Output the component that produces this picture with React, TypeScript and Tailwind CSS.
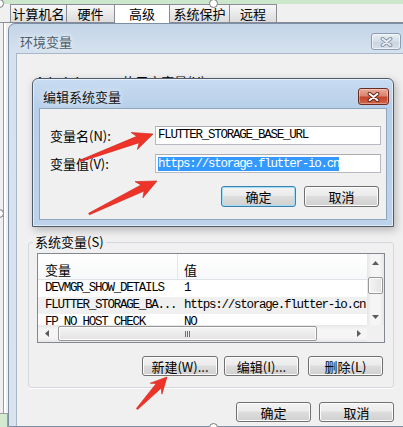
import React from 'react';

const CJK = "font-['Noto_Sans_CJK_SC','Liberation_Sans',sans-serif]";
const MONO = "font-['Liberation_Mono',monospace] text-[12.5px] tracking-[-1.25px]";

function Btn({ label, className = '', focused = false }: { label: string; className?: string; focused?: boolean }) {
  return (
    <div
      className={`flex items-center justify-center rounded-[3px] border text-[13px] leading-none text-black bg-[linear-gradient(180deg,#f3f3f3_0%,#ebebeb_45%,#dddddd_50%,#d0d0d0_100%)] ${
        focused ? 'border-[#3c7fb1] shadow-[inset_0_0_0_1px_#9fe0f8]' : 'border-[#707070] shadow-[inset_0_0_0_1px_#fcfcfc]'
      } ${className}`}
    >
      {label}
    </div>
  );
}

function Tri({ dir }: { dir: 'up' | 'down' | 'left' | 'right' }) {
  const v = dir === 'up' || dir === 'down';
  const pts = { up: '0,4 3.5,0 7,4', down: '0,0 7,0 3.5,4', left: '4,0 4,7 0,3.5', right: '0,0 0,7 4,3.5' }[dir];
  return (
    <svg width={v ? 7 : 4} height={v ? 4 : 7} viewBox={v ? '0 0 7 4' : '0 0 4 7'}>
      <polygon points={pts} fill="#5c5c5c" />
    </svg>
  );
}

function CloseX({ outer, inner }: { outer: string; inner: string }) {
  return (
    <svg width="13" height="10" viewBox="0 0 13 10">
      <path d="M2.5 1.8 L10.5 8.2 M10.5 1.8 L2.5 8.2" stroke={outer} strokeWidth="3.8" strokeLinecap="round" />
      <path d="M2.5 1.8 L10.5 8.2 M10.5 1.8 L2.5 8.2" stroke={inner} strokeWidth="2" strokeLinecap="round" />
    </svg>
  );
}

function Arrow({ x1, y1, x2, y2, h = 20, w = 9 }: { x1: number; y1: number; x2: number; y2: number; h?: number; w?: number }) {
  const dx = x2 - x1;
  const dy = y2 - y1;
  const L = Math.hypot(dx, dy);
  const a = (Math.atan2(dy, dx) * 180) / Math.PI;
  const pts = [
    [0, -0.8],
    [L - h + 4, -3.4],
    [L - h, -w],
    [L, 0],
    [L - h, w],
    [L - h + 4, 3.4],
    [0, 0.8],
  ]
    .map((p) => p.join(','))
    .join(' ');
  return (
    <g transform={`translate(${x1} ${y1}) rotate(${a})`}>
      <polygon points={pts} fill="#ee3328" stroke="#d0261c" strokeWidth="0.6" strokeLinejoin="round" />
    </g>
  );
}

function TabBar() {
  const base = 'h-[18px] flex items-center justify-center text-[13px] leading-none border-t border-r border-[#898c95]';
  const off = 'bg-[linear-gradient(180deg,#f7f7f7,#dcdcdc)]';
  return (
    <div className="h-[19px] shrink-0 flex items-end pl-[10px] border-b border-[#898c95] bg-[#f0f0f0]">
      <div className={`${base} ${off} w-[57px] border-l`}>计算机名</div>
      <div className={`${base} ${off} w-[48px]`}>硬件</div>
      <div className="h-[19px] -mb-px w-[55px] flex items-start justify-center pt-[2px] text-[13px] leading-none bg-white border-t border-r border-[#898c95]">
        高级
      </div>
      <div className={`${base} ${off} w-[60px]`}>系统保护</div>
      <div className={`${base} ${off} w-[47px]`}>远程</div>
    </div>
  );
}

function ListView() {
  return (
    <div className="w-[348px] h-[90px] border border-[#828790] bg-white grid grid-cols-[1fr_17px] grid-rows-[1fr_17px]">
      <div className="overflow-hidden flex flex-col">
        <div className="h-[26px] shrink-0 flex bg-[linear-gradient(180deg,#ffffff,#f7f8f9)] border-b border-[#dfe2e6] text-[13px] leading-none">
          <div className="w-[140px] pl-[7px] pt-[5px] flex items-center border-r border-[#e4e6ea]">变量</div>
          <div className="pl-[6px] pt-[5px] flex items-center">值</div>
        </div>
        {[
          ['DEVMGR_SHOW_DETAILS', '1', ''],
          ['FLUTTER_STORAGE_BA...', 'https://storage.flutter-io.cn', 'bg-[#f0f0f0]'],
          ['FP_NO_HOST_CHECK', 'NO', ''],
        ].map(([a, b, bg]) => (
          <div key={a} className={`h-[17px] shrink-0 flex items-center ${MONO} ${bg} whitespace-nowrap`}>
            <div className="w-[140px] pl-[7px] overflow-hidden">{a}</div>
            <div className="pl-[6px]">{b}</div>
          </div>
        ))}
      </div>
      <div className="flex flex-col bg-[linear-gradient(90deg,#e6e6e6,#f5f5f5_25%,#f5f5f5_75%,#e6e6e6)]">
        <div className="h-[17px] flex items-center justify-center">
          <Tri dir="up" />
        </div>
        <div className="flex-1 flex flex-col">
          <div className="mt-[6px] mx-[1px] h-[17px] rounded-[2px] border border-[#979797] bg-[linear-gradient(90deg,#f4f4f4,#e3e3e3)] shadow-[inset_0_0_0_1px_#fdfdfd]" />
        </div>
        <div className="h-[17px] flex items-center justify-center">
          <Tri dir="down" />
        </div>
      </div>
      <div className="flex bg-[linear-gradient(180deg,#e6e6e6,#f5f5f5_25%,#f5f5f5_75%,#e6e6e6)]">
        <div className="w-[17px] flex items-center justify-center">
          <Tri dir="left" />
        </div>
        <div className="flex-1 flex items-stretch py-[1px]">
          <div className="ml-[3px] w-[259px] rounded-[2px] border border-[#979797] bg-[linear-gradient(180deg,#f4f4f4,#e3e3e3)] shadow-[inset_0_0_0_1px_#fdfdfd] flex items-center justify-center gap-[1px]">
            <div className="w-[1px] h-[6px] bg-[#6e6e6e]" />
            <div className="w-[1px] h-[6px] bg-[#6e6e6e]" />
            <div className="w-[1px] h-[6px] bg-[#6e6e6e]" />
          </div>
        </div>
        <div className="w-[17px] flex items-center justify-center">
          <Tri dir="right" />
        </div>
      </div>
      <div className="bg-[#f0f0f0]" />
    </div>
  );
}

function EnvWindow() {
  return (
    <div className="w-[402px] shrink-0 rounded-tl-[7px] border border-[#7b8ea6] bg-[linear-gradient(180deg,#c4d5e8_0px,#d5e1ee_29px,#dae4ef_100%)] flex flex-col">
      <div className="h-[29px] shrink-0 flex items-start justify-between pl-[11px] pr-[8px] pt-[9px]">
        <div className="text-[13px] leading-[17px] text-[#4f5d6c] [text-shadow:0_0_6px_#ffffff]">环境变量</div>
        <div className="w-[30px] h-[17px] rounded-[3px] border border-[#8c9db2] bg-[linear-gradient(180deg,#e9eff5,#d3dde8_50%,#c9d4e1_51%,#d6dfe9)] shadow-[inset_0_0_0_1px_rgba(255,255,255,0.6)] flex items-center justify-center">
          <CloseX outer="#8793a3" inner="#e8edf3" />
        </div>
      </div>
      <div className="flex-1 ml-[7px] bg-[#f0f0f0] border-l border-t border-[#a9b8c9] flex flex-col pt-[21px]">
        <div className="h-[160px] shrink-0 pl-[19px] text-[13px] leading-[14px] whitespace-nowrap">Administrator 的用户变量(U)</div>
        <fieldset className="ml-[11px] w-[366px] shrink-0 border border-[#d3d9df] rounded-[3px] shadow-[0_1px_0_#ffffff]">
          <legend className="ml-[4px] px-[2px] text-[13px] leading-[14px]">系统变量(S)</legend>
          <div className="px-[8px] pt-[4px] pb-[11px] flex flex-col">
            <ListView />
            <div className="mt-[13px] flex justify-end pr-[2px]">
              <Btn label="新建(W)..." className="w-[76px] h-[20px]" />
              <Btn label="编辑(I)..." className="ml-[6px] w-[75px] h-[20px]" />
              <Btn label="删除(L)" className="ml-[9px] w-[75px] h-[20px]" />
            </div>
          </div>
        </fieldset>
        <div className="mt-[14px] ml-[11px] w-[366px] flex justify-end gap-[8px]">
          <Btn label="确定" className="w-[75px] h-[20px]" />
          <Btn label="取消" className="w-[75px] h-[20px]" />
        </div>
      </div>
    </div>
  );
}

function EditDialog() {
  return (
    <div className="absolute left-[32px] top-[78px] w-[362px] h-[149px] rounded-t-[6px] border border-[#4e5b6b] bg-[linear-gradient(180deg,#c8dcf1_0px,#b7cfe9_29px,#bdd3eb_100%)] shadow-[inset_0_0_0_1px_rgba(255,255,255,0.55),2px_3px_8px_rgba(0,0,0,0.25)] flex flex-col">
      <div className="h-[29px] shrink-0 flex items-start justify-between pl-[10px] pr-[4px] pt-[9px]">
        <div className="text-[13px] leading-[17px] text-[#111] [text-shadow:0_0_6px_#ffffff]">编辑系统变量</div>
        <div className="w-[31px] h-[17px] rounded-[3px] border border-[#6b2b20] bg-[linear-gradient(180deg,#eaa896_0%,#da8670_45%,#c5452d_55%,#d16448_100%)] shadow-[inset_0_0_0_1px_rgba(255,255,255,0.35)] flex items-center justify-center">
          <CloseX outer="#5e2014" inner="#ffffff" />
        </div>
      </div>
      <div className="mx-[6px] h-[112px] shrink-0 bg-[#f0f0f0] border border-[#8fa4bd] flex flex-col pt-[17px] pl-[10px]">
        <div className="flex items-center">
          <div className="w-[105px] text-[13px] leading-none">变量名(N):</div>
          <div className={`w-[226px] h-[19px] bg-white border border-[#b7bac2] border-t-[#abadb3] flex items-center pl-[2px] ${MONO} whitespace-nowrap`}>
            FLUTTER_STORAGE_BASE_URL
          </div>
        </div>
        <div className="flex items-center mt-[9px]">
          <div className="w-[105px] text-[13px] leading-none">变量值(V):</div>
          <div className={`w-[226px] h-[19px] bg-white border border-[#b7bac2] border-t-[#abadb3] flex items-center pl-[2px] ${MONO} whitespace-nowrap`}>
            <span className="bg-[#3399ff] text-white leading-[14px]">https://storage.flutter-io.cn</span>
          </div>
        </div>
        <div className="mt-[13px] flex justify-end gap-[8px] pr-[7px]">
          <Btn label="确定" focused className="w-[75px] h-[21px]" />
          <Btn label="取消" className="w-[75px] h-[21px]" />
        </div>
      </div>
    </div>
  );
}

function Handle({ className }: { className: string }) {
  return <div className={`absolute w-[9px] h-[9px] rounded-full bg-white border border-[#7a7a7a] ${className}`} />;
}

export default function App() {
  return (
    <div className={`relative w-[403px] h-[427px] overflow-hidden bg-[#f0f0f0] ${CJK} text-black`}>
      <div className="flex flex-col h-full">
        <div className="h-[4px] shrink-0 bg-[#cce7cb]" />
        <TabBar />
        <div className="flex flex-1 min-h-0">
          <div className="w-[8px] shrink-0 flex flex-col">
            <div className="flex-1 ml-[3px] w-[3px] border-l border-[#9c9c9c] bg-white" />
            <div className="h-[14px] border-t border-r border-[#9c9c9c] bg-[#d3e9d0]" />
          </div>
          <EnvWindow />
        </div>
      </div>
      <EditDialog />
      <svg className="absolute inset-0 pointer-events-none" width="403" height="427" viewBox="0 0 403 427">
        <Arrow x1={80} y1={161} x2={153} y2={134} />
        <Arrow x1={89} y1={214} x2={157} y2={181} />
        <Arrow x1={137} y1={409} x2={167} y2={377} h={16} w={8} />
      </svg>
      <Handle className="left-[-5px] top-[-1px]" />
      <Handle className="left-[209px] top-[-1px]" />
      <Handle className="left-[-5px] top-[209px]" />
      <Handle className="left-[209px] top-[423px]" />
    </div>
  );
}
